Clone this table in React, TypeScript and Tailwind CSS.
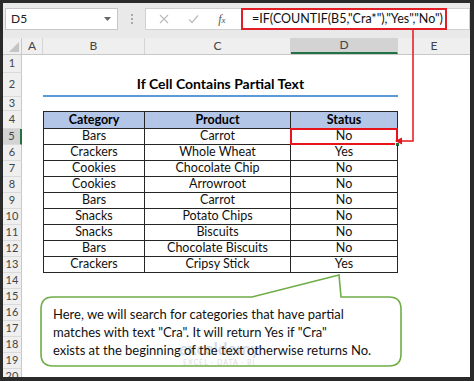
import React from 'react';

const rows = [
  { category: 'Bars', product: 'Carrot', status: 'No' },
  { category: 'Crackers', product: 'Whole Wheat', status: 'Yes' },
  { category: 'Cookies', product: 'Chocolate Chip', status: 'No' },
  { category: 'Cookies', product: 'Arrowroot', status: 'No' },
  { category: 'Bars', product: 'Carrot', status: 'No' },
  { category: 'Snacks', product: 'Potato Chips', status: 'No' },
  { category: 'Snacks', product: 'Biscuits', status: 'No' },
  { category: 'Bars', product: 'Chocolate Biscuits', status: 'No' },
  { category: 'Crackers', product: 'Cripsy Stick', status: 'Yes' },
];

const RowHead: React.FC<{ n: number; active?: boolean }> = ({ n, active }) => (
  <div
    className={`w-[19px] shrink-0 flex items-center justify-center border-b border-[#dadada] text-[11px] text-[#444] ${
      active ? 'bg-[#d3d3d3] border-r-2 border-r-[#217346]' : 'bg-[#efefef] border-r border-r-[#c8c8c8]'
    }`}
  >
    {n}
  </div>
);

const FormulaBar = () => (
  <div className="h-[35px] bg-[#e9e9e9] flex items-start pt-[5px] pl-[2px] gap-0">
    <div className="w-[113px] h-[22px] bg-white border border-[#c6c6c6] flex items-center justify-between pl-[5px] pr-[6px] text-[12px] text-[#222]">
      <span>D5</span>
      <svg width="7" height="4" viewBox="0 0 7 4">
        <path d="M0 0 L7 0 L3.5 4 Z" fill="#666" />
      </svg>
    </div>
    <div className="w-[27px] h-[22px] flex flex-col items-center justify-center gap-[2px]">
      <span className="w-[2px] h-[2px] bg-[#aaa]" />
      <span className="w-[2px] h-[2px] bg-[#aaa]" />
      <span className="w-[2px] h-[2px] bg-[#aaa]" />
    </div>
    <div className="flex-1 h-[22px] bg-white border border-[#d0d0d0] flex items-center">
      <div className="w-[96px] h-full flex items-center justify-around pl-[4px] pr-[6px] border-r border-[#e0e0e0]">
        <svg width="10" height="10" viewBox="0 0 10 10">
          <path d="M1 1 L9 9 M9 1 L1 9" stroke="#bdbdbd" strokeWidth="1.2" />
        </svg>
        <svg width="11" height="10" viewBox="0 0 11 10">
          <path d="M1 5.5 L4 8.5 L10 1.5" stroke="#bdbdbd" strokeWidth="1.2" fill="none" />
        </svg>
        <span className="text-[12px] italic text-[#555]" style={{ fontFamily: '"Liberation Serif", serif' }}>
          f<span className="text-[9px]">x</span>
        </span>
      </div>
      <div className="h-[22px] w-[206px] -ml-px border-2 border-[#e21f26] flex items-center pl-[9px] text-[12.5px] text-[#111]">
        =IF(COUNTIF(B5,"Cra*"),"Yes","No")
      </div>
    </div>
  </div>
);

const ColHeaders = () => (
  <div className="h-[17px] flex bg-[#efefef] border-b border-[#c8c8c8] text-[12px] text-[#444]">
    <div className="w-[19px] shrink-0 border-r border-[#c8c8c8] flex items-end justify-end p-[2px]">
      <svg width="10" height="10" viewBox="0 0 10 10">
        <path d="M10 0 L10 10 L0 10 Z" fill="#c4c4c4" />
      </svg>
    </div>
    <div className="w-[21px] shrink-0 border-r border-[#d4d4d4] flex items-center justify-center">A</div>
    <div className="w-[102px] shrink-0 border-r border-[#d4d4d4] flex items-center justify-center">B</div>
    <div className="w-[146px] shrink-0 border-r border-[#d4d4d4] flex items-center justify-center">C</div>
    <div className="w-[107px] shrink-0 bg-[#d3d3d3] border-b-2 border-[#217346] border-r border-r-[#d4d4d4] flex items-center justify-center">
      D
    </div>
    <div className="flex-1 flex items-center justify-center">E</div>
  </div>
);

const EmptyRow: React.FC<{ n: number; h: string }> = ({ n, h }) => (
  <div className={`flex ${h}`}>
    <RowHead n={n} />
    <div className="flex-1" />
  </div>
);

export default function App() {
  return (
    <div
      className="w-[474px] h-[381px] bg-[#2a2a2a] pt-[3px] pl-[3px] pr-[4px] pb-[4px]"
      style={{ fontFamily: 'Lato, "Open Sans", sans-serif' }}
    >
      <div className="relative w-full h-full bg-white overflow-hidden">
        <FormulaBar />
        <ColHeaders />

        <EmptyRow n={1} h="h-[18px]" />
        <div className="flex h-[24px]">
          <RowHead n={2} />
          <div className="w-[21px] shrink-0" />
          <div className="w-[355px] shrink-0 border-b-2 border-[#5b9bd5] flex items-center justify-center pb-[2px] text-[14px] font-bold text-black">
            If Cell Contains Partial Text
          </div>
          <div className="flex-1" />
        </div>
        <EmptyRow n={3} h="h-[14px]" />

        <div className="flex h-[18px]">
          <RowHead n={4} />
          <div className="w-[21px] shrink-0" />
          <div className="flex text-[12.5px] font-bold text-black bg-[#b4c6e7] border-t border-[#262626]">
            <div className="w-[102px] border-l border-r border-b border-[#262626] flex items-center justify-center">Category</div>
            <div className="w-[146px] border-r border-b border-[#262626] flex items-center justify-center">Product</div>
            <div className="w-[107px] border-r border-b border-[#262626] flex items-center justify-center">Status</div>
          </div>
          <div className="flex-1" />
        </div>

        {rows.map((r, i) => (
          <div key={i} className="flex h-[16px]">
            <RowHead n={i + 5} active={i === 0} />
            <div className="w-[21px] shrink-0" />
            <div className="flex text-[12.5px] text-[#111]">
              <div className="w-[102px] border-l border-r border-b border-[#262626] flex items-center justify-center">
                {r.category}
              </div>
              <div className="w-[146px] border-r border-b border-[#262626] flex items-center justify-center">
                {r.product}
              </div>
              <div className="relative w-[107px] border-r border-b border-[#262626] flex items-center justify-center">
                {r.status}
                {i === 0 && (
                  <>
                    <div className="absolute -left-[1px] -top-[1px] -right-[1px] -bottom-[1px] border-2 border-[#e8141c]" />
                    <div className="absolute -right-[3px] -bottom-[3px] w-[5px] h-[5px] bg-[#217346] border border-white" />
                  </>
                )}
              </div>
            </div>
            <div className="flex-1" />
          </div>
        ))}

        {[14, 15, 16, 17, 18, 19].map((n) => (
          <EmptyRow key={n} n={n} h="h-[16px]" />
        ))}
        <EmptyRow n={20} h="h-[16px]" />

        {/* red connector from formula to D5 */}
        <svg className="absolute left-0 top-0" width="467" height="374" viewBox="0 0 467 374">
          <path d="M410 27 L410 138 L398 138" stroke="#e8141c" strokeWidth="1.5" fill="none" />
          <path d="M392 138 L399 134.5 L399 141.5 Z" fill="#e8141c" />
        </svg>

        {/* callout */}
        <svg className="absolute left-0 top-0" width="467" height="374" viewBox="0 0 467 374">
          <path
            d="M50 294 L249 294 L336 272 L338 294 L386 294 Q398 294 398 306 L398 351 Q398 363 386 363 L50 363 Q38 363 38 351 L38 306 Q38 294 50 294 Z"
            fill="white"
            stroke="#70ad47"
            strokeWidth="1.6"
          />
        </svg>
        <div className="absolute left-[176px] top-[337px] flex flex-col items-center opacity-25 pointer-events-none">
          <span className="text-[17px] font-bold text-[#4a7ab5] leading-[18px]">exceldemy</span>
          <span className="text-[7px] tracking-[1px] text-[#777] leading-[8px]">EXCEL · DATA · BI</span>
        </div>
        <div className="absolute left-[50px] top-[302px] text-[13px] leading-[18px] text-[#111]">
          Here, we will search for categories that have partial
          <br />
          matches with text "Cra". It will return Yes if "Cra"
          <br />
          exists at the beginning of the text otherwise returns No.
        </div>
      </div>
    </div>
  );
}
